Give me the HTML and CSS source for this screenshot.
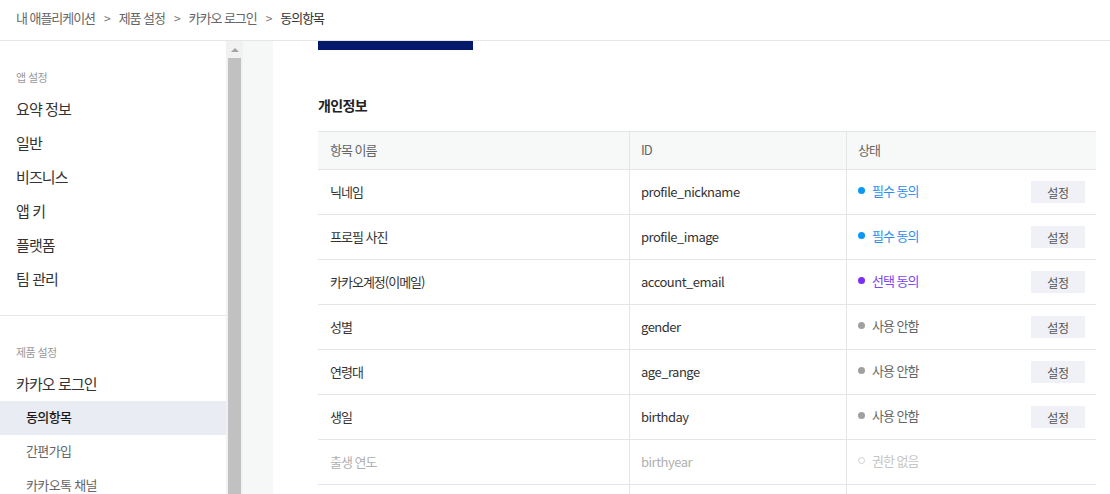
FILE: index.html
```html
<!DOCTYPE html>
<html lang="ko">
<head>
<meta charset="utf-8">
<title>동의항목</title>
<link rel="stylesheet" href="styles.css">
</head>
<body>
<header class="crumbs">
  <span class="crumb">내 애플리케이션</span>
  <span class="sep">&gt;</span>
  <span class="crumb">제품 설정</span>
  <span class="sep">&gt;</span>
  <span class="crumb">카카오 로그인</span>
  <span class="sep">&gt;</span>
  <span class="crumb current">동의항목</span>
</header>
<div class="layout">
  <aside class="sidebar">
    <section class="menu-section">
      <div class="menu-label">앱 설정</div>
      <a class="menu-item">요약 정보</a>
      <a class="menu-item">일반</a>
      <a class="menu-item">비즈니스</a>
      <a class="menu-item">앱 키</a>
      <a class="menu-item">플랫폼</a>
      <a class="menu-item">팀 관리</a>
    </section>
    <section class="menu-section">
      <div class="menu-label">제품 설정</div>
      <a class="menu-item">카카오 로그인</a>
      <a class="sub-item active">동의항목</a>
      <a class="sub-item">간편가입</a>
      <a class="sub-item">카카오톡 채널</a>
    </section>
  </aside>
  <div class="scrollbar">
    <span class="scroll-arrow"></span>
    <span class="scroll-thumb"></span>
  </div>
  <div class="gutter"></div>
  <main class="content">
    <div class="banner"></div>
    <h2 class="section-title">개인정보</h2>
    <div class="grid">
      <div class="row head">
        <div class="cell">항목 이름</div>
        <div class="cell">ID</div>
        <div class="cell">상태</div>
      </div>
      <div class="row">
        <div class="cell">닉네임</div>
        <div class="cell id">profile_nickname</div>
        <div class="cell status"><span class="state required"><i class="dot"></i>필수 동의</span><button class="btn">설정</button></div>
      </div>
      <div class="row">
        <div class="cell">프로필 사진</div>
        <div class="cell id">profile_image</div>
        <div class="cell status"><span class="state required"><i class="dot"></i>필수 동의</span><button class="btn">설정</button></div>
      </div>
      <div class="row">
        <div class="cell">카카오계정(이메일)</div>
        <div class="cell id">account_email</div>
        <div class="cell status"><span class="state optional"><i class="dot"></i>선택 동의</span><button class="btn">설정</button></div>
      </div>
      <div class="row">
        <div class="cell">성별</div>
        <div class="cell id">gender</div>
        <div class="cell status"><span class="state unused"><i class="dot"></i>사용 안함</span><button class="btn">설정</button></div>
      </div>
      <div class="row">
        <div class="cell">연령대</div>
        <div class="cell id">age_range</div>
        <div class="cell status"><span class="state unused"><i class="dot"></i>사용 안함</span><button class="btn">설정</button></div>
      </div>
      <div class="row">
        <div class="cell">생일</div>
        <div class="cell id">birthday</div>
        <div class="cell status"><span class="state unused"><i class="dot"></i>사용 안함</span><button class="btn">설정</button></div>
      </div>
      <div class="row disabled">
        <div class="cell">출생 연도</div>
        <div class="cell id">birthyear</div>
        <div class="cell status"><span class="state none"><i class="dot"></i>권한 없음</span></div>
      </div>
      <div class="row">
        <div class="cell">&nbsp;</div>
        <div class="cell"></div>
        <div class="cell"></div>
      </div>
    </div>
  </main>
</div>
</body>
</html>
```
FILE: styles.css
```css
* { box-sizing: border-box; }
html, body { margin: 0; padding: 0; }
body {
  width: 1110px;
  height: 494px;
  overflow: hidden;
  background: #fff;
  font-family: "Noto Sans CJK KR", "Noto Sans", sans-serif;
  color: #333;
  letter-spacing: -0.04em;
}

.crumbs {
  height: 41px;
  border-bottom: 1px solid #e6e6e6;
  display: flex;
  align-items: center;
  gap: 8px;
  padding: 0 0 5px 16px;
  font-size: 13px;
  letter-spacing: -0.08em;
  color: #666;
}
.crumbs .sep { font-size: 12px; color: #777; padding: 0 1px; }
.crumbs .current { color: #333; }

.layout {
  display: flex;
  height: 453px;
}

.sidebar {
  width: 226px;
  flex: none;
  background: #fff;
}
.menu-section {
  padding: 28px 0 19px;
  border-bottom: 1px solid #e6e6e6;
}
.menu-label {
  height: 16px;
  line-height: 16px;
  padding-left: 16px;
  margin-bottom: 7px;
  font-size: 11px;
  color: #999;
}
.menu-item {
  display: block;
  height: 34px;
  line-height: 34px;
  padding-left: 16px;
  font-size: 15px;
  letter-spacing: -0.06em;
  color: #333;
}
.sub-item {
  display: block;
  height: 34px;
  line-height: 32px;
  padding-left: 26px;
  font-size: 13px;
  color: #666;
}
.sub-item.active {
  background: #e9ecf3;
  color: #1a1a1a;
  font-weight: 500;
}

.scrollbar {
  width: 17px;
  flex: none;
  background: #f1f1f1;
  display: flex;
  flex-direction: column;
  align-items: center;
}
.scroll-arrow {
  margin-top: 7px;
  width: 0;
  height: 0;
  border-left: 4px solid transparent;
  border-right: 4px solid transparent;
  border-bottom: 4px solid #a3a3a3;
}
.scroll-thumb {
  margin-top: 6px;
  width: 13px;
  flex: 1;
  background: #c1c1c1;
}

.gutter {
  width: 30px;
  flex: none;
  background: #f6f7f7;
}

.content {
  flex: 1;
  padding-left: 45px;
  background: #fff;
}
.banner {
  width: 155px;
  height: 9px;
  background: #05196a;
}
.section-title {
  margin: 45px 0 16px;
  height: 20px;
  line-height: 20px;
  font-size: 14px;
  font-weight: 700;
  color: #222;
}

.grid { width: 778px; }
.row {
  display: grid;
  grid-template-columns: 311px 217px 250px;
  height: 45px;
  border-bottom: 1px solid #e5e5e5;
  font-size: 13px;
  color: #333;
}
.row.head {
  height: 39px;
  border-top: 1px solid #e5e5e5;
  background: #f7f8f8;
  color: #666;
}
.cell {
  display: flex;
  align-items: center;
  padding: 0 0 2px 12px;
  letter-spacing: -1px;
}
.row.head .cell { padding-bottom: 2px; }
.cell + .cell { border-left: 1px solid #e5e5e5; padding-left: 11px; }
.cell.id { letter-spacing: -0.5px; }

.status {
  justify-content: space-between;
  padding-right: 11px;
}
.state {
  display: flex;
  align-items: center;
  gap: 7px;
  margin-top: -2px;
}
.dot {
  width: 7px;
  height: 7px;
  border-radius: 50%;
  display: inline-block;
}
.required { color: #2c8ff0; }
.required .dot { background: #0b98f5; }
.optional { color: #7a45f3; }
.optional .dot { background: #7b2ef5; }
.unused { color: #666; }
.unused .dot { background: #a0a0a0; }
.none { color: #c6c6c6; }
.none .dot { border: 1px solid #cfcfcf; }

.disabled { color: #b0b0b0; }

.btn {
  width: 54px;
  height: 22px;
  margin-bottom: -2px;
  border: 0;
  background: #f0f1f6;
  font-family: inherit;
  font-size: 12px;
  color: #555;
  letter-spacing: -0.02em;
  padding: 0;
}
```
